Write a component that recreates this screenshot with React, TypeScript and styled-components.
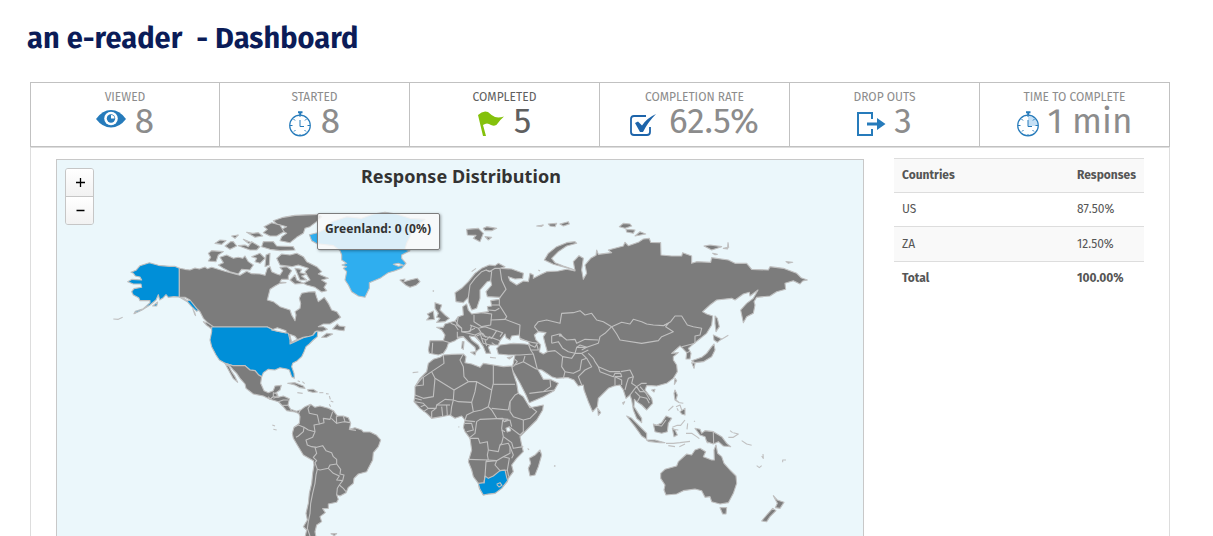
import React from "react";
import styled, { createGlobalStyle } from "styled-components";

const GlobalStyle = createGlobalStyle`
  * { box-sizing: border-box; }
  body { margin: 0; background: #fff; font-family: "Fira Sans", "Open Sans", "Noto Sans", sans-serif; font-stretch: 85%; color: #555; overflow: hidden; }
`;

const Page = styled.main`
  width: 1213px;
  height: 536px;
  overflow: hidden;
  padding: 18px 0 0 30px;
`;
const Title = styled.h1`
  margin: 0 0 24px -3px;
  height: 40px;
  line-height: 42px;
  font-size: 29px;
  letter-spacing: 0.06px;
  font-weight: 700;
  color: #0b1c58;
  white-space: pre;
`;
const Stats = styled.section`
  display: grid;
  grid-template-columns: 188px repeat(5, 190px);
  width: 1140px;
  height: 65px;
  border: 1px solid #c1c1c1;
`;
const Stat = styled.div<{ $active?: boolean }>`
  padding-top: 5px;
  text-align: center;
  color: ${(p) => (p.$active ? "#5f5f5f" : "#8c8c8c")};
  & + & { border-left: 1px solid #c1c1c1; }
`;
const StatLabel = styled.div`
  height: 18px;
  line-height: 18px;
  font-size: 12px;
`;
const StatBody = styled.div<{ $gap: number }>`
  display: flex;
  justify-content: center;
  gap: ${(p) => p.$gap}px;
  height: 32px;
`;
const StatValue = styled.span`
  font-size: 35px;
  line-height: 30px;
`;
const Panel = styled.section`
  display: flex;
  align-items: flex-start;
  width: 1140px;
  height: 400px;
  padding: 11px 25px 0;
  border: 1px solid #ddd;
`;
const MapBox = styled.div`
  position: relative;
  width: 808px;
  height: 420px;
  border: 1px solid #c8c8c8;
  background: #ebf7fb;
  font-family: "Noto Sans", "Open Sans", sans-serif;
  font-stretch: 100%;
`;
const MapSvg = styled.svg`
  display: block;
`;
const MapTitle = styled.div`
  position: absolute;
  top: 4px;
  left: 0;
  width: 100%;
  padding-left: 2px;
  text-align: center;
  font-size: 18px;
  letter-spacing: 0.08px;
  line-height: 25px;
  font-weight: 700;
  color: #333;
`;
const Zoom = styled.div`
  position: absolute;
  top: 8px;
  left: 8px;
  width: 29px;
  border: 1px solid #c6c6c6;
  border-radius: 3px;
  overflow: hidden;
`;
const ZoomButton = styled.button`
  display: flex;
  align-items: center;
  justify-content: center;
  width: 27px;
  height: 27px;
  padding: 0 0 0 2px;
  border: 0;
  background: linear-gradient(#fff, #f2f2f2);
  & + & { height: 28px; border-top: 1px solid #c6c6c6; }
`;
const Tooltip = styled.div`
  position: absolute;
  left: 260px;
  top: 53px;
  width: 123px;
  height: 37px;
  padding: 6px 0 0 7px;
  border: 1px solid #7c7c7c;
  border-radius: 2px;
  background: rgba(249, 249, 249, 0.85);
  box-shadow: 1px 1px 3px rgba(0, 0, 0, 0.35);
  font-size: 12px;
  letter-spacing: 0.1px;
  line-height: 18px;
  font-weight: 700;
  color: #333;
  white-space: nowrap;
`;
const Table = styled.table`
  width: 250px;
  margin: -1px 0 0 30px;
  border-collapse: collapse;
  font-size: 12px;
  line-height: 18px;
`;
const Row = styled.tr<{ $height: number; $striped?: boolean; $strong?: boolean }>`
  height: ${(p) => p.$height}px;
  background: ${(p) => (p.$striped ? "#f9f9f9" : "#fff")};
  border-top: 1px solid #ddd;
  font-weight: ${(p) => (p.$strong ? 700 : 400)};
`;
const Cell = styled.td`
  padding: 0 8px 1px;
  text-align: left;
  &:last-child { width: 75px; padding-right: 0; }
`;

const EyeIcon = () => (
  <svg width="30" height="18" viewBox="0 0 30 18" style={{ marginTop: 4 }}>
    <path d="M0 9Q6.500 0 15 0Q23.500 0 30 9Q23.500 17.500 15 17.500Q6.500 17.500 0 9Z" fill="#267bbb" />
    <circle cx="15" cy="8.500" r="6.800" fill="#fff" />
    <circle cx="15" cy="8.500" r="4.200" fill="#267bbb" />
    <path d="M15 8.500V5A3.500 3.500 0 0 1 18.500 8.500Z" fill="#fff" />
  </svg>
);
const WatchIcon = ({ filled }: { filled?: boolean }) => (
  <svg width="22" height="26" viewBox="0 0 22 26" style={{ marginTop: 5 }}>
    {filled && <path d="M11 15V5A10 10 0 0 1 21 15Z" fill="#c5e0f5" />}
    <circle cx="11" cy="14.500" r="10.300" fill="none" stroke="#267bbb" strokeWidth="1.200" />
    <path d="M9 1.200H13.500M11.200 1V4" stroke="#267bbb" strokeWidth="2" />
    <path d="M11 9V15.500H15M11 4V6M11 23V25M1 14.500H3.500M18.500 14.500H21M4.500 8L6 9.500M17.500 8L16 9.500M5 20.500L6.500 19M17 20.500L15.500 19" fill="none" stroke="#267bbb" strokeWidth="1" />
  </svg>
);
const FlagIcon = () => (
  <svg width="26" height="26" viewBox="0 0 26 26" style={{ marginTop: 5 }}>
    <path d="M0 4Q5-1 10 1Q13 4 17 6Q21 7 26 5.500Q22 9 20 12Q18 16 13 14Q9 11 5 14L8 25H5Z" fill="#84c10b" />
  </svg>
);
const CheckIcon = () => (
  <svg width="27" height="23" viewBox="0 0 27 23" style={{ marginTop: 8 }}>
    <path d="M16 2H4Q1 2 1 5V18Q1 21 4 21H17Q20 21 20 18V13" fill="none" stroke="#1d64aa" strokeWidth="1.800" />
    <path d="M5 9L8 7.500L12 11.500Q17 4 26 0Q18 8 13 18H10Z" fill="#1d64aa" />
  </svg>
);
const ExitIcon = () => (
  <svg width="29" height="25" viewBox="0 0 29 25" style={{ marginTop: 6 }}>
    <path d="M15 7V1H1V23H15V17" fill="none" stroke="#267bbb" strokeWidth="2" />
    <path d="M10 10.500H20V6L28.500 12L20 18V13.500H10Z" fill="#267bbb" />
  </svg>
);

const LAND = "#7c7c7c";
const WATER = "#ebf7fb";
const BORDER = "#c0c0c0";

/* Shapes are drawn on grids three times finer than the page, one grid per region. */
type Region = { x: number; y: number; land?: string[]; us?: string[]; hover?: string[]; water?: string[]; lines?: string[] };

const regions: Region[] = [
  {
    x: 50, y: 150,
    us: [
      "243,367 258,361 270,347 298,338 325,346 358,349 374,349 388,355 388,441 372,440 355,442 348,434 340,443 329,450 325,434 318,450 300,465 275,481 252,491 256,484 280,476 300,458 300,452 270,452 266,443 250,435 245,425 252,416 275,412 273,402 250,402 233,395 246,388 275,390 270,381 256,378 250,370",
      "308,468 323,456 320,468",
      "388,441 400,444 412,452 425,450 440,468 448,480 440,484 425,470 412,455",
    ],
    lines: ["190,507 205,508 218,502", "433,484 437,498", "252,491 262,484"],
  },
  {
    x: 180, y: 200,
    land: [
      "-2,205 15,208 30,210 45,204 58,207 75,201 82,206 95,202 120,209 135,214 165,222 180,226 200,214 215,221 240,222 255,226 262,205 270,200 275,215 290,222 300,225 308,212 300,202 320,200 335,212 325,228 325,238 305,238 300,246 318,248 300,250 285,258 270,268 262,300 280,305 300,320 330,330 335,345 345,362 348,345 345,335 360,325 362,310 358,295 365,280 385,276 405,275 410,292 415,305 433,292 445,310 455,330 470,335 482,352 470,360 450,372 430,372 415,380 430,380 442,388 425,395 412,393 405,395 397,408 370,412 350,420 335,432 330,428 325,405 315,398 290,394 275,387 262,381 95,381 85,370 70,355 60,335 50,325 30,300 15,292 -2,291",
      "280,62 310,52 345,46 415,43 425,50 410,65 390,80 375,85 370,100 350,112 330,128 300,122 305,110 320,100 300,90 320,80 290,72",
      "252,80 275,68 300,75 312,95 290,108 270,108 250,98 262,88",
      "85,160 95,152 130,155 115,165 108,185 85,183 92,172",
      "120,172 140,165 160,175 175,172 188,175 195,168 205,185 220,195 210,210 185,208 175,222 150,215 130,205 115,195 130,188",
      "105,130 120,120 138,122 125,133", "135,138 152,125 160,125 170,138 150,148",
      "200,97 218,100 235,98 248,108 225,112", "155,108 175,105 165,115",
      "175,137 195,135 205,140 215,125 240,140 230,150 210,150", "190,118 215,128 205,130",
      "250,125 280,125 290,138 340,140 345,150 300,152 270,148 245,140",
      "215,170 240,160 255,175 240,190 225,185 230,175", "258,165 270,160 268,195 255,200",
      "290,175 305,162 330,165 350,160 370,170 380,185 410,200 425,215 415,222 445,235 425,240 440,250 432,262 440,272 425,276 405,262 380,255 370,250 390,240 375,215 385,205 355,195 335,200 300,195",
      "330,240 345,225 350,240 370,250 345,252", "345,205 365,208 360,218 380,222 365,228 380,240 360,240",
      "458,387 472,372 478,378 495,380 492,392 475,390", "425,412 440,400 458,402 440,412",
      "660,240 675,237 672,245 690,240 712,235 720,245 708,256 690,262 678,256",
      "70,365 85,370 100,380 95,387 80,376",
    ],
    us: ["95,381 262,381 280,390 292,394 310,397 325,400 330,420 330,432 345,425 370,413 392,408 400,405 408,394 413,396 412,410 400,420 388,432 378,440 372,455 365,470 352,482 338,490 335,500 342,520 343,535 335,530 328,510 320,507 300,503 285,510 265,508 250,518 245,530 235,524 225,512 210,510 195,497 160,497 135,490 118,480 108,465 95,440 90,420 95,395"],
    hover: ["388,104 412,98 440,85 455,65 500,50 545,55 580,42 615,37 650,42 690,55 735,58 700,85 690,110 680,130 675,148 690,152 665,165 665,175 678,190 665,205 645,212 625,218 600,235 575,245 568,248 568,265 555,292 535,288 515,275 505,255 495,240 500,215 490,205 500,200 486,195 500,190 485,180 485,165 480,152 460,137 420,132 412,132 395,122"],
    water: ["275,390 292,383 318,392 318,399 300,395", "329,403 345,409 352,418 335,427", "640,193 655,190 670,196 655,199"],
    lines: ["348,551 342,551", "758,272 762,274", "38,325 45,345"],
  },
  {
    x: 220, y: 350,
    land: [
      "15,40 40,47 75,47 90,60 105,62 115,74 125,80 122,100 132,122 145,128 160,122 165,108 184,106 180,120 165,130 160,140 150,148 130,138 100,132 78,115 75,102 60,85 50,70 40,60 30,48",
      "15,40 28,50 35,65 45,80 53,97 40,86 30,68",
      "160,128 172,132 175,142 190,138 208,146 204,165 212,178 230,184 240,180 240,192 225,186 200,182 188,168 175,155 150,148 160,140",
      "240,182 255,170 272,163 285,172 300,168 325,175 340,182 352,198 370,198 385,203 392,220 388,238 405,233 425,240 430,246 450,246 470,256 482,270 475,290 460,308 458,330 445,355 440,365 415,372 402,385 400,400 385,412 378,428 360,438 350,434 355,448 350,457 325,462 325,475 308,476 316,488 300,500 305,515 290,525 285,545 288,562 255,562 260,540 250,530 262,510 258,490 265,460 268,430 275,400 278,370 282,345 280,332 250,315 235,290 220,265 217,250 222,232 238,220 240,200 236,190",
      "203,100 225,98 250,108 255,115 240,113 225,105", "263,119 280,118 292,126 278,127 265,124", "333,551 350,551 343,557",
    ],
    lines: [
      "272,163 264,175 268,190 292,195 298,222 282,225 285,245", "298,222 312,218 310,205 330,208 338,185", "334,205 350,220 349,200 355,198", "350,220 372,215 390,218", "370,198 375,215",
      "222,232 235,225 252,232 250,245 235,258 228,262", "252,232 265,240 285,245 278,262 258,270 262,285 275,290 290,292 308,287 318,302 335,308 340,320 350,328 350,342 362,358 360,372 372,375 368,392 358,405 352,415 350,434",
      "285,292 290,310 280,322 290,332 285,338 292,358 300,360 325,355 330,345 350,342", "325,355 340,370 358,378 350,390 368,392", "358,405 370,415 378,425",
      "292,358 288,375 285,400 278,430 272,460 270,490 265,515 262,535 270,558",
      "232,128 248,130", "298,128 310,128", "233,92 240,95", "247,95 254,101", "157,225 165,228", "160,238 170,240", "328,138 331,148", "332,153 340,156", "328,163 332,170", "388,238 408,241", "318,131 326,132",
      "145,140 150,148", "160,140 175,142", "175,155 190,150 204,150", "188,166 204,166", "212,178 215,186", "170,130 172,140 160,145",
    ],
  },
  {
    x: 400, y: 210,
    land: [
      "168,275 165,248 185,235 205,215 225,190 245,175 268,165 285,167 295,160 315,170 305,175 335,177 370,190 368,205 345,207 325,200 330,212 350,225 370,213 385,215 390,190 400,195 400,205 425,192 440,185 475,183 500,178 525,183 520,155 537,137 550,145 545,180 550,208 560,190 555,165 572,145 588,136 590,120 595,133 635,128 625,120 670,108 675,97 685,107 715,97 730,87 748,85 752,97 782,98 783,135 815,138 845,138 848,128 875,138 875,160 890,155 932,157 935,143 985,150 1005,160 1040,160 1055,178 1105,180 1110,170 1150,175 1190,190 1203,203 1222,210 1208,213 1200,222 1180,212 1155,220 1157,238 1130,245 1110,258 1070,262 1062,275 1065,285 1060,310 1040,320 1030,338 1022,300 1040,280 1060,265 1074,240 1050,258 1048,247 1030,252 1005,270 995,265 950,270 930,285 908,305 920,312 938,318 935,345 920,370 895,390 882,400 865,415 873,430 870,447 858,447 860,428 848,415 840,408 815,430 835,428 820,440 820,450 830,465 832,485 820,505 800,520 770,528 755,527 740,527 735,540 755,565 758,580 740,600 725,585 710,575 703,568 702,590 715,610 725,625 725,638 710,625 700,600 695,570 690,555 678,565 670,540 660,525 642,528 625,535 595,565 592,590 578,605 565,575 552,540 550,525 535,528 522,510 505,503 495,503 470,505 455,500 440,490 425,480 413,478 420,490 430,508 450,508 475,520 462,542 430,560 388,578 378,555 360,520 340,485 335,475 340,460 345,435 325,435 295,432 290,415 300,405 340,400 375,402 390,405 385,395 360,385 358,375 335,378 330,390 318,383 315,372 300,392 295,405 270,405 265,412 272,430 258,430 250,410 240,395 225,380 208,378 215,390 235,405 240,415 228,425 225,412 205,395 190,380 175,385 165,392 145,400 140,415 130,430 115,435 88,430 85,420 90,392 130,392 135,375 125,360 110,352 130,352 135,342 165,333 175,320 190,315 188,290 200,282 205,300 215,312 245,308 265,305 262,290 275,288 272,272 298,268 300,262 262,260 258,245 275,225 272,212 262,215 240,240 240,265 230,295 215,300 205,275 205,262 190,278",
      "200,58 235,55 250,70 240,95 220,85 228,76 202,75", "250,55 260,50 290,55 275,62 255,62", "255,80 275,82 265,90",
      "433,150 445,130 470,110 500,98 525,95 530,100 500,108 475,125 455,145 465,158 490,168 525,180 460,163",
      "410,48 430,45 425,49", "445,42 470,40 465,50 450,48", "480,42 505,35 508,42 490,48",
      "105,278 125,285 120,300 135,315 148,325 135,335 110,337 120,325 110,322 115,310 105,295", "80,330 88,320 82,312 100,303 103,328",
      "187,395 192,395 190,418 185,415", "212,427 228,425 225,435", "322,443 338,440 328,447",
      "658,50 670,40 690,42 695,48 675,55", "678,58 705,60 700,70 680,66", "705,78 720,65 737,72",
      "912,108 930,105 965,110 935,120", "938,130 952,133 945,134", "970,115 983,117 984,98 986,112", "1158,155 1178,157 1165,160",
      "945,318 952,325 958,350 948,365 945,340", "940,375 965,387 952,397 942,390", "942,402 945,420 935,440 910,455 885,458 875,452 905,442 920,430 935,410", "875,458 885,460 882,475",
    ],
    water: ["403,375 415,365 438,368 430,380 435,400 442,425 430,432 418,425 422,405 408,390", "478,378 482,372 486,378"],
    lines: [
      "205,262 210,225 225,205 245,185 258,180 275,185 272,212", "258,180 268,185 285,175 300,175 310,172", "300,175 305,210 318,238 300,262", "298,268 298,285 320,320 315,328 360,345 358,375", "275,285 298,285", "265,300 285,302 298,295", "245,308 275,312 272,345 245,350 222,335 222,315", "272,330 315,328", "175,320 170,345 185,355 185,365 210,365 215,345", "210,345 235,355 255,350 290,362 275,385 250,378 235,355",
      "165,333 175,345 185,355", "172,365 172,382 190,380", "185,365 205,370 225,375 240,368 245,385 260,390 268,380 300,392", "290,362 308,368 300,380", "245,385 250,400 270,405", "130,392 150,398", "98,398 96,430", "203,365 225,355", "225,375 240,395", "255,390 260,408", "230,378 248,370 258,382", "285,405 275,398",
      "360,388 400,398 415,400", "385,402 392,420 400,432 360,435 345,435", "390,405 405,412 410,402 415,420 392,420", "400,432 405,450 412,478", "345,465 370,455 375,438", "345,448 352,455 340,470", "370,455 410,478", "388,550 430,545 465,540", "430,545 452,530 450,508",
      "442,425 465,422 488,440 485,470 495,485 490,505", "403,350 415,335 440,330 480,340 485,310 520,308 540,302 555,315 575,310 590,330 610,335 635,350", "415,365 403,350", "455,400 455,378 478,372 500,390 525,388 530,400 555,388 595,390",
      "455,400 475,395 488,415 505,425 525,430 530,412 560,412 595,400", "488,440 515,445 525,430 545,430 565,420", "545,430 560,445 545,450 540,480 520,490 495,485", "565,430 580,445 585,455 595,470 630,485 660,485", "560,445 575,470 555,480 535,500 545,525", "530,412 540,405 560,412 545,420",
      "635,350 665,337 690,342 700,328 725,335 740,342 760,345 790,347 805,340 797,350 820,365 785,380 775,392 725,400 660,390 650,372 635,350", "790,347 812,335 825,318 845,318 862,345 880,350 905,355 900,375 885,378 885,400", "635,350 615,370 600,380 595,400", "845,410 885,400",
      "595,470 600,485 640,500 645,490 662,490 665,500 645,500 645,525", "645,500 665,510 665,525", "662,485 690,480 700,500 685,505 680,520 675,540", "700,500 695,520 710,530 725,520 740,520", "690,555 705,535 710,530 720,545 735,545", "705,545 720,560 740,565 748,580", "720,560 712,575", "860,428 870,424", "720,530 738,550 750,570",
      "99,242 101,244", "215,185 228,175", "415,180 420,183", "270,442 288,444", "965,388 985,376", "152,340 165,345 175,360",
    ],
  },
  {
    x: 400, y: 340,
    land: [
      "130,45 155,43 190,42 198,50 195,68 215,72 240,82 250,70 280,75 310,80 335,78 340,100 350,130 355,160 370,170 385,195 390,203 430,195 428,210 410,240 375,275 360,290 365,315 370,335 350,355 335,375 340,395 325,415 322,425 305,445 285,460 265,462 250,465 238,445 235,430 220,410 215,390 205,365 215,330 210,295 195,275 190,262 195,240 185,228 165,235 150,225 125,230 95,235 80,220 60,205 42,185 45,165 45,140 60,115 80,95 85,70 100,58 120,52",
      "420,330 425,345 415,380 405,405 390,408 385,385 392,370 388,355 405,345",
    ],
    us: ["235,430 252,428 255,408 265,415 280,408 300,392 315,390 320,412 323,422 305,445 285,460 265,462 250,465 240,448"],
    water: ["318,265 328,260 332,272 322,276"],
    lines: [
      "290,433 300,428 306,436 297,441 290,433", "130,45 132,70 95,95 65,115 45,140", "95,95 105,115 100,170 70,175 45,165", "70,112 70,135 45,138", "105,115 162,150 205,125 192,110 190,80 180,60 190,42", "205,125 230,125 275,150 280,130 280,75", "280,133 345,133", "162,150 160,180 135,178 110,195 108,205 85,205 70,190 45,185", "160,180 175,185 215,187 225,155 230,125", "275,150 270,180 265,200 275,210 290,235 325,238", "215,187 220,215 200,225 195,240", "220,215 245,210 265,200", "275,205 325,210 330,185 345,165 355,160", "330,185 330,215 340,230 370,240 390,235 410,215 385,195", "370,240 370,275 360,285 330,262", "325,238 312,245 308,235 240,238 230,245 225,280 210,292", "195,250 215,250 220,270 200,275", "208,295 235,295 240,310 262,305 265,330 262,345 265,360 205,358", "265,330 295,335 300,315 325,310 330,320 330,340 310,350 290,362 265,360", "308,240 305,265 310,290 305,310 300,315", "310,290 335,308 340,325 370,320", "312,245 330,240 335,260", "305,270 315,275", "262,360 258,365 255,408 252,430", "290,362 285,375 300,392 322,390 328,355 310,350", "330,320 340,345 335,355", "160,180 155,200 152,225", "140,195 142,228", "125,200 128,228", "108,205 95,215 95,235", "85,205 70,215", "110,195 150,195", "258,365 290,362", "322,390 326,410", "45,175 65,180", "62,200 75,195", "225,245 195,242",
      "383,325 387,330", "463,377 466,379", "38,98 55,96", "175,260 178,262",
    ],
  },
  {
    x: 540, y: 340,
    land: [
      "362,400 375,388 410,378 415,365 440,342 455,345 465,330 480,325 497,335 490,350 515,360 523,360 522,330 528,315 533,340 545,350 552,370 570,390 588,408 590,430 580,460 565,488 540,492 515,485 510,470 495,472 485,452 465,447 430,452 410,462 378,465 372,450 375,435 362,415",
      "540,503 560,503 558,522 548,522", "700,467 712,480 732,487 720,505 706,503 712,490", "698,505 708,512 690,530 680,545 665,543 680,525",
      "465,265 480,268 485,280 495,272 520,275 545,290 560,310 572,320 550,318 535,305 520,312 500,305 495,290 480,285",
      "260,228 275,235 300,260 320,280 320,298 305,288 285,260", "320,300 345,300 375,308 360,308 325,304", "340,252 350,256 365,248 378,228 395,235 385,250 382,275 365,280 345,275",
      "405,150 412,165 408,180 418,188 405,180 402,160", "420,215 435,205 435,225 425,222", "405,115 410,122 403,133", "335,150 345,148 342,156", "173,205 182,218 175,226", "248,188 254,185 250,193", "397,265 405,270 412,285 402,290",
    ],
    lines: [
      "397,262 412,256 422,256 435,240", "400,268 415,270", "378,310 400,310 420,308 450,304", "385,317 405,320", "418,320 435,312", "438,280 455,280 470,290 478,296", "443,250 441,268", "520,275 521,312", "565,292 580,292 595,282 580,278", "570,272 578,278", "605,302 620,312 635,316", "665,348 670,355 669,342", "650,377 658,383 665,377", "728,367 728,360 738,360", "385,212 400,198", "408,200 420,195 425,210", "462,243 465,245", "42,377 46,379", "342,255 365,258 378,240", "420,188 430,190", "500,305 505,310", "411,205 415,212",
    ],
  },
];

const polys = (items: string[] | undefined, fill: string) => items?.map((points) => <polygon key={points} points={points} fill={fill} />);

const WorldMap = () => (
  <MapSvg width="806" height="376" viewBox="57 160 806 376" role="img" aria-label="World map">
    {regions.map((r, i) => (
      <g key={i} transform={`translate(${r.x} ${r.y}) scale(.33333)`} stroke={BORDER} strokeWidth="3.300" strokeLinejoin="round">
        {polys(r.land, LAND)}
        {polys(r.us, "#008fd8")}
        {polys(r.hover, "#2faeef")}
        {polys(r.water, WATER)}
        {r.lines?.map((points) => <polyline key={points} points={points} fill="none" />)}
      </g>
    ))}
  </MapSvg>
);

const stats = [
  { label: "VIEWED", value: "8", icon: <EyeIcon />, gap: 9 },
  { label: "STARTED", value: "8", icon: <WatchIcon />, gap: 10 },
  { label: "COMPLETED", value: "5", icon: <FlagIcon />, gap: 10, active: true },
  { label: "COMPLETION RATE", value: "62.5%", icon: <CheckIcon />, gap: 12 },
  { label: "DROP OUTS", value: "3", icon: <ExitIcon />, gap: 8 },
  { label: "TIME TO COMPLETE", value: "1 min", icon: <WatchIcon filled />, gap: 9 },
];

export default function App() {
  return (
    <>
      <GlobalStyle />
      <Page>
        <Title>{"an e-reader  - Dashboard"}</Title>
        <Stats>
          {stats.map((s) => (
            <Stat key={s.label} $active={s.active}>
              <StatLabel>{s.label}</StatLabel>
              <StatBody $gap={s.gap}>{s.icon}<StatValue>{s.value}</StatValue></StatBody>
            </Stat>
          ))}
        </Stats>
        <Panel>
          <MapBox>
            <WorldMap />
            <MapTitle>Response Distribution</MapTitle>
            <Zoom>
              <ZoomButton aria-label="Zoom in"><svg width="11" height="11"><path d="M1 5.500H10M5.500 1V10" stroke="#000" strokeWidth="1.300" /></svg></ZoomButton>
              <ZoomButton aria-label="Zoom out"><svg width="11" height="11"><path d="M1.500 5.500H9.500" stroke="#000" strokeWidth="1.300" /></svg></ZoomButton>
            </Zoom>
            <Tooltip>Greenland: 0 (0%)</Tooltip>
          </MapBox>
          <Table>
            <tbody>
              <Row $height={34} $striped $strong><Cell>Countries</Cell><Cell>Responses</Cell></Row>
              <Row $height={34}><Cell>US</Cell><Cell>87.50%</Cell></Row>
              <Row $height={35} $striped><Cell>ZA</Cell><Cell>12.50%</Cell></Row>
              <Row $height={34} $strong><Cell>Total</Cell><Cell>100.00%</Cell></Row>
            </tbody>
          </Table>
        </Panel>
      </Page>
    </>
  );
}
